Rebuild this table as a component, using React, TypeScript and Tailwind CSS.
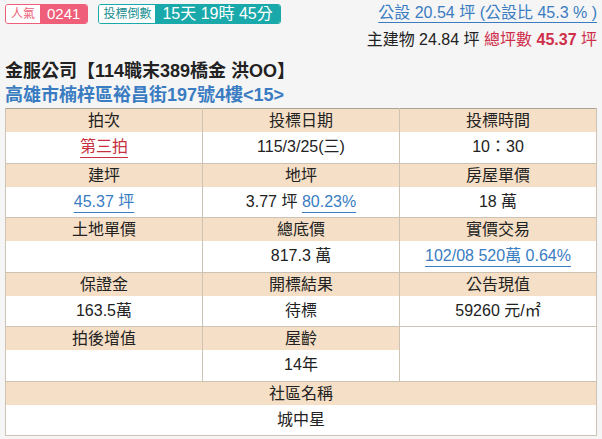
import React from "react";

const font = { fontFamily: '"Liberation Sans", "Noto Sans CJK TC", sans-serif' };

function Head({ children, colSpan }: { children?: React.ReactNode; colSpan?: number }) {
  return (
    <td
      colSpan={colSpan}
      className="h-[23px] bg-[#f5dfc6] border-x border-[#cdc3b4] text-center align-middle text-[16px] leading-[23px] text-[#222] p-0"
    >
      {children}
    </td>
  );
}

function Val({ children, colSpan }: { children?: React.ReactNode; colSpan?: number }) {
  return (
    <td
      colSpan={colSpan}
      className="h-[31px] bg-white border-x border-b border-[#cdc3b4] text-center align-middle text-[16px] leading-[20px] text-[#222] p-0"
    >
      {children}
    </td>
  );
}

const blueLink = "text-[#3a7cc2] underline decoration-[#3a7cc2] underline-offset-[5px]";

export default function App() {
  return (
    <div style={font} className="w-[602px] h-[439px] bg-[#f5f5f5] px-[5px] overflow-hidden">
      <div className="h-[58px] flex justify-between items-start">
        <div className="flex gap-[10px] pt-[4px]">
          <div className="flex h-[20px] rounded-[3px] border border-[#ef5f7a] overflow-hidden">
            <span className="bg-white text-[#ef5f7a] text-[12px] leading-[18px] px-[5px]">人氣</span>
            <span className="bg-[#ef5f7a] text-white text-[15px] leading-[18px] px-[7px]">0241</span>
          </div>
          <div className="flex h-[20px] rounded-[3px] border border-[#1aa9ab] overflow-hidden">
            <span className="bg-white text-[#1a8f91] text-[12px] leading-[18px] px-[4px]">投標倒數</span>
            <span className="bg-[#1aa9ab] text-white text-[16px] leading-[18px] px-[7px]">15天 19時 45分</span>
          </div>
        </div>
        <div className="flex flex-col items-end pt-[3px] text-[16px]">
          <div className="h-[22px] leading-[20px] text-[#3a7cc2] underline decoration-[#3a7cc2] underline-offset-[4px]">
            公設 20.54 坪 (公設比 45.3 % )
          </div>
          <div className="mt-[5px] h-[20px] leading-[20px] text-[#222]">
            主建物 24.84 坪 <span className="text-[#cf2e4b]">總坪數 <b>45.37</b> 坪</span>
          </div>
        </div>
      </div>
      <div className="h-[26px] leading-[26px] text-[18px] font-bold text-[#222]">
        金服公司【114職末389橋金 洪OO】
      </div>
      <div className="h-[24px] leading-[22px] text-[18px] font-bold text-[#3a7cc2]">
        高雄市楠梓區裕昌街197號4樓&lt;15&gt;
      </div>
      <table className="w-[592px] table-fixed border-collapse border border-[#a9a196]">
        <tbody>
          <tr>
            <Head>拍次</Head>
            <Head>投標日期</Head>
            <Head>投標時間</Head>
          </tr>
          <tr>
            <Val>
              <span className="text-[#c8303f] underline decoration-[#c8303f] underline-offset-[5px]">第三拍</span>
            </Val>
            <Val>115/3/25(三)</Val>
            <Val>10：30</Val>
          </tr>
          <tr>
            <Head>建坪</Head>
            <Head>地坪</Head>
            <Head>房屋單價</Head>
          </tr>
          <tr>
            <Val>
              <span className={blueLink}>45.37 坪</span>
            </Val>
            <Val>
              3.77 坪 <span className={blueLink}>80.23%</span>
            </Val>
            <Val>18 萬</Val>
          </tr>
          <tr>
            <Head>土地單價</Head>
            <Head>總底價</Head>
            <Head>實價交易</Head>
          </tr>
          <tr>
            <Val></Val>
            <Val>817.3 萬</Val>
            <Val>
              <span className={blueLink}>102/08 520萬 0.64%</span>
            </Val>
          </tr>
          <tr>
            <Head>保證金</Head>
            <Head>開標結果</Head>
            <Head>公告現值</Head>
          </tr>
          <tr>
            <Val>163.5萬</Val>
            <Val>待標</Val>
            <Val>59260 元/㎡</Val>
          </tr>
          <tr>
            <Head>拍後增值</Head>
            <Head>屋齡</Head>
            <td rowSpan={2} className="bg-white border-x border-b border-[#cdc3b4] p-0"></td>
          </tr>
          <tr>
            <Val></Val>
            <Val>14年</Val>
          </tr>
          <tr>
            <Head colSpan={3}>社區名稱</Head>
          </tr>
          <tr>
            <Val colSpan={3}>城中星</Val>
          </tr>
        </tbody>
      </table>
    </div>
  );
}
